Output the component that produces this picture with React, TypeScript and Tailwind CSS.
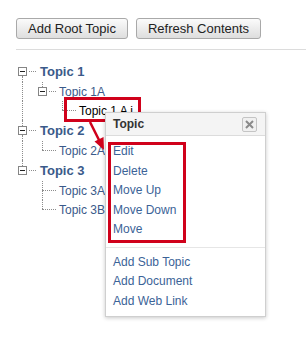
import React from "react";

const lineColor = "border-[#8c8c8c]";

type RowProps = {
  guides: boolean[];
  box?: boolean;
  up?: boolean;
  down?: boolean;
  label: string;
  bold?: boolean;
  selected?: boolean;
};

const Vline = ({ show }: { show?: boolean }) => (
  <div className="flex-1 flex">
    <div className="w-5 flex justify-center">
      {show && <div className={`w-0 h-full border-l border-dotted ${lineColor}`} />}
    </div>
  </div>
);

const TreeRow = ({ guides, box, up, down, label, bold, selected }: RowProps) => (
  <div className={`flex ${bold ? "h-[21px]" : "h-[19px]"}`}>
    {guides.map((g, i) => (
      <div key={i} className="w-5 flex justify-center">
        {g && <div className={`w-0 h-full border-l border-dotted ${lineColor}`} />}
      </div>
    ))}
    <div className="w-[24px] flex flex-col">
      <Vline show={up} />
      {box ? (
        <div className="h-[9px] flex items-center">
          <div className="ml-[6px] w-[9px] h-[9px] border border-[#858585] bg-white flex items-center justify-center">
            <div className="w-[5px] h-px bg-[#222]" />
          </div>
          <div className={`flex-1 ml-[2px] border-t border-dotted ${lineColor}`} />
        </div>
      ) : (
        <div className="h-px flex">
          <div className={`ml-[10px] flex-1 border-t border-dotted ${lineColor}`} />
        </div>
      )}
      <Vline show={down} />
    </div>
    <div
      className={`flex items-center whitespace-nowrap ${
        bold ? "ml-[4px] text-[13px] font-bold text-[#3a5a8a]" : "ml-[3px] text-[12px]"
      } ${selected ? "text-black" : bold ? "" : "text-[#3a5a8a]"}`}
    >
      {label}
    </div>
  </div>
);

const MenuItem = ({ children }: { children: React.ReactNode }) => (
  <div className="h-[19.5px] leading-[19.5px] pl-[7px] text-[12px] text-[#3b6397]">{children}</div>
);

export default function App() {
  return (
    <div
      className="relative w-[306px] h-[339px] bg-white overflow-hidden"
      style={{ fontFamily: '"Liberation Sans", Arial, sans-serif' }}
    >
      <div className="pl-4 pt-[18px] flex gap-2">
        <button className="h-[21px] px-[11px] text-[13px] text-[#222] border border-[#a9a9a9] rounded-[3px] bg-gradient-to-b from-[#fbfbfb] to-[#dedede]">
          Add Root Topic
        </button>
        <button className="h-[21px] px-[11px] text-[13px] text-[#222] border border-[#a9a9a9] rounded-[3px] bg-gradient-to-b from-[#fbfbfb] to-[#dedede]">
          Refresh Contents
        </button>
      </div>
      <div className="ml-4 mt-[10px] border-t border-[#dcdcdc]" />

      <div className="pl-3 mt-[11px]">
        <TreeRow guides={[]} box down label="Topic 1" bold />
        <TreeRow guides={[true]} box up label="Topic 1A" />
        <TreeRow guides={[true, false]} up label="Topic 1 A i" selected />
        <TreeRow guides={[]} box up down label="Topic 2" bold />
        <TreeRow guides={[true]} up label="Topic 2A" />
        <TreeRow guides={[]} box up label="Topic 3" bold />
        <TreeRow guides={[false]} up down label="Topic 3A" />
        <TreeRow guides={[false]} up label="Topic 3B" />
      </div>

      {/* annotation around the clicked node */}
      <div className="absolute left-[64px] top-[97px] w-[77px] h-[25px] border-[3px] border-[#d0011b]" />

      {/* context popup */}
      <div className="absolute left-[105px] top-[112px] w-[161px] h-[205px] bg-white border border-[#cfcfcf] shadow-[0_1px_4px_rgba(0,0,0,0.22)]">
        <div className="h-[23px] bg-[#f4f4f4] border-b border-[#dcdcdc] flex items-center justify-between pl-[7px] pr-2">
          <span className="text-[12px] font-bold text-[#333]">Topic</span>
          <button className="w-[15px] h-[15px] border border-[#c4c4c4] rounded-[2px] bg-[#f0f0f0] flex items-center justify-center">
            <svg width="9" height="9" viewBox="0 0 9 9">
              <path d="M1 1 L8 8 M8 1 L1 8" stroke="#8a8a8a" strokeWidth="2" />
            </svg>
          </button>
        </div>
        <div className="pt-[6px]">
          <MenuItem>Edit</MenuItem>
          <MenuItem>Delete</MenuItem>
          <MenuItem>Move Up</MenuItem>
          <MenuItem>Move Down</MenuItem>
          <MenuItem>Move</MenuItem>
        </div>
        <div className="mt-[7px] border-t border-[#e6e6e6]" />
        <div className="pt-[5px]">
          <MenuItem>Add Sub Topic</MenuItem>
          <MenuItem>Add Document</MenuItem>
          <MenuItem>Add Web Link</MenuItem>
        </div>
      </div>

      {/* annotation around the menu actions */}
      <div className="absolute left-[108px] top-[142px] w-[78px] h-[101px] border-[3px] border-[#d0011b]" />

      {/* annotation arrow */}
      <svg className="absolute left-0 top-0" width="306" height="339" viewBox="0 0 306 339">
        <path d="M90 122 L99 140" stroke="#d0011b" strokeWidth="2.5" fill="none" />
        <path d="M104 150 L94.5 141.5 L103.5 137 Z" fill="#d0011b" />
      </svg>
    </div>
  );
}
